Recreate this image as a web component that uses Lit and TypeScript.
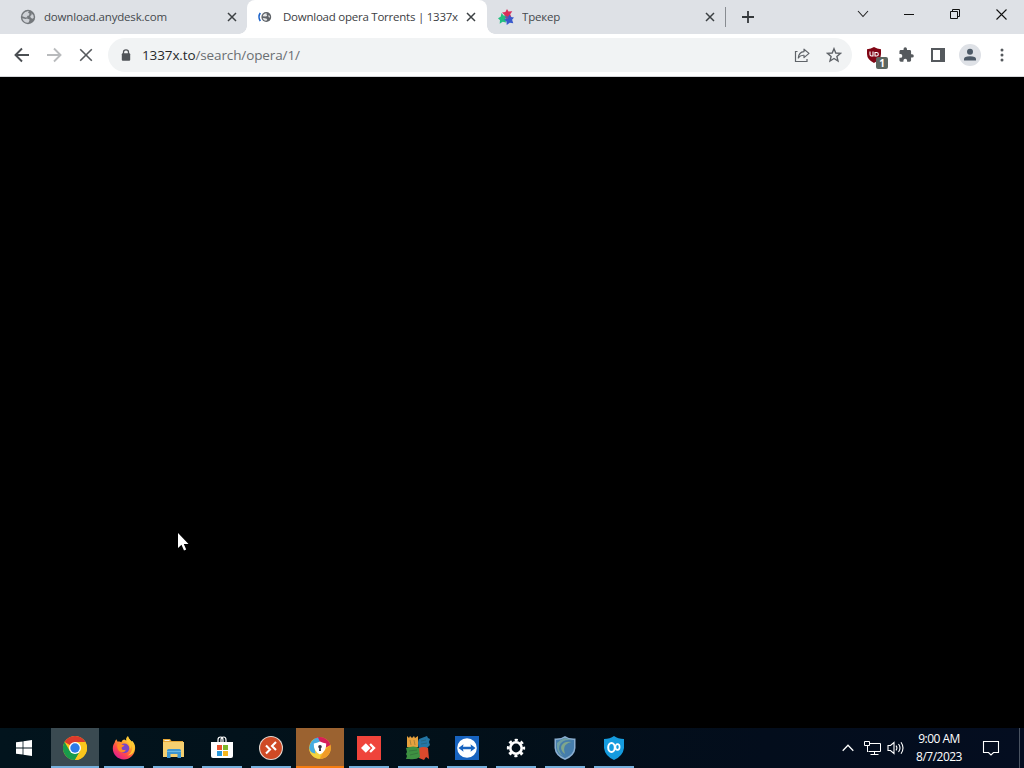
import { css, html, LitElement, TemplateResult } from 'lit';
import { customElement, property } from 'lit/decorators.js';

const globe = html`
  <svg viewBox="0 0 16 16" width="16" height="16">
    <circle cx="8" cy="8" r="7.2" fill="#74787c"/>
    <path d="M9 2.200L8 3.800 9.500 4.600 9 6.500 7 7 7.500 8.300 5.500 8.500 2.300 7.200C2.900 4.200 5.600 1.900 9 2.200Z" fill="#dee1e6" fill-opacity=".85"/>
    <path d="M2.300 9.300L5.500 10 7 9.500 9.500 10.500 9.300 12 8.300 13.800C5.200 14 2.800 12 2.300 9.300Z" fill="#dee1e6" fill-opacity=".85"/>
    <path d="M11.500 4.200L13.500 6.500 13.700 9 12.200 9.700 10.600 8.500 10.200 7 11.600 6Z" fill="#dee1e6" fill-opacity=".85"/>
  </svg>`;

const loadingGlobe = html`
  <svg viewBox="0 0 16 16" width="16" height="16">
    <path d="M3.300 4C1.700 6.200 1.700 9.800 3.300 12" fill="none" stroke="#1b62c9" stroke-width="1.700"/>
    <circle cx="9.300" cy="8" r="4.900" fill="#5f6368"/>
    <path d="M9.800 4.300L9.300 5.300 10.200 6 9.700 7.200 8.500 7.600 5.700 7.200C6.200 5.400 7.800 4.100 9.800 4.300Z" fill="#fff" fill-opacity=".85"/>
    <path d="M5.700 9L8 9.300 10.300 9.900 9.500 11.700C7.500 11.900 6.100 10.800 5.700 9Z" fill="#fff" fill-opacity=".85"/>
    <path d="M11.600 5.700L12.900 7.300 12.800 8.700 11.500 8Z" fill="#fff" fill-opacity=".85"/>
  </svg>`;

const tracker = html`
  <svg viewBox="0 0 16 16" width="16" height="16">
    <path d="M9 0L10.500 2.500 14.300 2.200 12.200 5.200 13.600 8.800 9.800 8.200 6.400 9.400 6.600 6 4 3.600 7.400 2.900Z" fill="#d92f5a"/>
    <path d="M3.600 4L5.500 6.600 8.800 7 7.400 9.800 8 13.400 4.700 12.700 1.700 14.700 2 11.300 0 9.300 2.600 7.800Z" fill="#22bf80"/>
    <path d="M11.600 5.600L12.900 8 16 8.400 14.100 10.800 15.300 14.300 11.800 13.800 8.700 16 8.500 12.600 6 10.800 9.300 9.200Z" fill="#3859cc"/>
    <circle cx="8.800" cy="8.500" r="1.600" fill="#76509f"/>
  </svg>`;

const taskIcons: Record<string, TemplateResult> = {
  chrome: html`
    <svg viewBox="0 0 24 24" width="24" height="24">
      <circle cx="12" cy="12" r="12" fill="#fbc61c"/>
      <path d="M12 12L1.600 6A12 12 0 0 1 22.400 6Z" fill="#dc3a2c"/>
      <path d="M1.600 6A12 12 0 0 0 12 24L17.200 15 12 12 6.800 15Z" fill="#199b4b"/>
      <path d="M12 6H22.400A12 12 0 0 1 12 24L17.200 15Z" fill="#fbc61c"/>
      <circle cx="12" cy="12" r="6" fill="#fff"/>
      <circle cx="12" cy="12" r="4.700" fill="#2c7be8"/>
    </svg>`,
  firefox: html`
    <svg viewBox="0 0 24 24" width="24" height="24">
      <defs>
        <linearGradient id="fox" x1=".85" y1=".1" x2=".25" y2=".95">
          <stop offset="0" stop-color="#ffe543"/>
          <stop offset=".38" stop-color="#ff9a2b"/>
          <stop offset=".68" stop-color="#ff4a4a"/>
          <stop offset="1" stop-color="#e3208b"/>
        </linearGradient>
      </defs>
      <path d="M4.300 3.200L5.700 5.800C7 5.300 8.400 5.600 9.300 6.200 10.400 4 11.600 3.700 12.300 3.600L14.500 4.700C14 2.400 14.700 1 16 .2 16.200 2.500 18.200 3.700 19.600 5.500L20.400 5C22.800 8 23.300 10.200 23.100 13 22.500 19.300 17.700 23.500 12 23.500 5.700 23.500 1 18.800.800 12.800.700 9.500 1.700 8 2.700 6.500 3 5 3.500 4 4.300 3.200Z" fill="url(#fox)"/>
      <circle cx="12.500" cy="12.300" r="4.800" fill="#7845c8"/>
      <path d="M5.300 8.200C8 7.300 9.700 9 12.400 9.200 12.300 10.500 10.200 10.600 9.700 11.500 9.200 13.800 11.500 14.700 13.700 13.700 13 17 8.500 17 6.500 14.500 5.200 12.700 5 10.400 5.300 8.200Z" fill="#ff8a24"/>
      <path d="M14.500 4.700C16.500 7 18.400 9 17.800 13.200 19.300 12 19.500 10 19.200 8.600 22 13 18.800 18.500 15 19.600 21 19.500 23.500 14 22.200 9 21 6 17 4 16 .2 14.700 1 14 2.400 14.500 4.700Z" fill="#ffc832"/>
    </svg>`,
  explorer: html`
    <svg viewBox="0 0 24 24" width="24" height="24">
      <path d="M2 3H9L10.500 5H22V9H2Z" fill="#e5a636"/>
      <path d="M3.500 4H8.500V5H3.500Z" fill="#f5efe0"/>
      <rect x="2" y="6" width="21" height="15" fill="#f5cf70"/>
      <path d="M6 22V14.500Q6 13 7.500 13H18.500Q20 13 20 14.500V22H16.500V18H9.500V22Z" fill="#3d95d0"/>
      <path d="M6 15H20V16H6Z" fill="#69b9e5"/>
    </svg>`,
  store: html`
    <svg viewBox="0 0 24 24" width="24" height="24">
      <path d="M8 6V4Q8 1 10.700 1 13 1 13 4V6M11 6V4Q11 1 13.700 1 16 1 16 4V6" fill="none" stroke="#fff" stroke-width="1.200"/>
      <path d="M1 6H23V20Q23 22 21 22H3Q1 22 1 20Z" fill="#fff"/>
      <path d="M7 9H12V14H7Z" fill="#e9542f"/>
      <path d="M13 9H18V14H13Z" fill="#7eb72b"/>
      <path d="M7 15H12V20H7Z" fill="#2999dc"/>
      <path d="M13 15H18V20H13Z" fill="#f7b71f"/>
    </svg>`,
  remote: html`
    <svg viewBox="0 0 24 24" width="24" height="24">
      <circle cx="12" cy="12" r="12" fill="#e4d9d2"/>
      <circle cx="12" cy="12" r="10.900" fill="#cf4a25"/>
      <path d="M7 9.500L11 13.500 7 17.500M17 6L13 10 17 14" fill="none" stroke="#fff" stroke-width="2.100"/>
    </svg>`,
  secureBrowser: html`
    <svg viewBox="0 0 24 24" width="24" height="24">
      <circle cx="12" cy="12" r="10.800" fill="#f4bf2a"/>
      <path d="M7 2.200A11 11 0 0 1 22.500 9L17 12 12 6Z" fill="#d71f58"/>
      <path d="M22.500 9A11 11 0 0 1 12 22.800L16 15Z" fill="#f09b29"/>
      <path d="M12 22.800A11 11 0 0 1 1.200 11L6 8 12 18Z" fill="#f5d33d"/>
      <path d="M1.200 12A11 11 0 0 1 10 1.400L12 6 6 9 7.500 17.500Q2 17 1.200 12Z" fill="#46ace0"/>
      <path d="M12 5.500Q15 7.200 18.200 7.500 18.700 15 12 18.500 5.300 15 5.800 7.500 9 7.200 12 5.500Z" fill="#fff"/>
      <circle cx="12" cy="10.800" r="1.800" fill="#303543"/>
      <path d="M11.300 11H12.700L13 15H11Z" fill="#303543"/>
    </svg>`,
  anydesk: html`
    <svg viewBox="0 0 24 24" width="24" height="24">
      <rect width="24" height="24" fill="#ef443b"/>
      <path d="M4 12L8.800 7.200 13.600 12 8.800 16.800Z" fill="#fff"/>
      <path d="M12.300 8.800L13.900 7.200 18.700 12 13.900 16.800 12.300 15.200 15.500 12Z" fill="#fff"/>
    </svg>`,
  avg: html`
    <svg viewBox="0 0 24 24" width="24" height="24">
      <path d="M1 0L3 2 4 0 6 2 8 0 9 2 12 0V11Q7 13 1 11Z" fill="#e6a13e"/>
      <path d="M13 3L21 0 22 2 24 3 23 6 24 9 21 12H13Q11 7 13 3Z" fill="#2376a5"/>
      <path d="M13 12Q18 10 22 12L23 23 20 21 18 24 13 22Z" fill="#d9492c"/>
      <path d="M0 12Q8 9 13 12L14 21Q10 24 3 23L0 23 1 20 0 18 1 16Z" fill="#3e9142"/>
      <path d="M4 4L5 9M8 4L9 9M15 5L20 4M15 8L21 7M3 15L11 14M4 19L12 17" stroke="#263d30" stroke-opacity=".3"/>
    </svg>`,
  teamviewer: html`
    <svg viewBox="0 0 24 24" width="24" height="24">
      <rect width="24" height="24" fill="#1763bf"/>
      <circle cx="12" cy="12" r="9.800" fill="#fff"/>
      <path d="M3.500 12L8.500 8.200 8 10.800H16L15.500 8.200 20.500 12 15.500 15.800 16 13.200H8L8.500 15.800Z" fill="#1763bf"/>
    </svg>`,
  settings: html`
    <svg viewBox="0 0 24 24" width="24" height="24">
      <circle cx="12" cy="12" r="5.700" fill="none" stroke="#fff" stroke-width="2.600"/>
      <circle cx="12" cy="12" r="7.900" fill="none" stroke="#fff" stroke-width="2.500" stroke-dasharray="3.102" stroke-dashoffset="1.551"/>
    </svg>`,
  shield: html`
    <svg viewBox="0 0 24 24" width="24" height="24">
      <path d="M12 0Q16 3 22.500 2.500V12Q22 20 12 24 2 20 1.500 12V2.500Q8 3 12 0Z" fill="#8aaed0"/>
      <path d="M12 1.700Q16 4 21 4V12Q20.500 18.500 12 22.300 3.500 18.500 3 12V4Q8 4 12 1.700Z" fill="#467dab"/>
      <path d="M19 4.300Q9 3 6.300 10 5 15 10 20 5 18 4 12V7Q8 3 12 2Z" fill="#6f9fa3"/>
      <path d="M18.500 6Q11 4.500 8.300 10 7 14.500 12 18 10 12 12.500 9 15 6.500 18.500 6Z" fill="#7fa68b"/>
    </svg>`,
  vpn: html`
    <svg viewBox="0 0 24 24" width="24" height="24">
      <path d="M12 0Q16 3 22 3V12Q21 20 12 24 3 20 2 12V3Q8 3 12 0Z" fill="#159bde"/>
      <ellipse cx="9.500" cy="11.500" rx="3.300" ry="4.600" fill="none" stroke="#fff" stroke-width="2"/>
      <ellipse cx="15.500" cy="11" rx="2.100" ry="2.800" fill="none" stroke="#fff" stroke-width="1.700"/>
    </svg>`,
};

@customElement('browser-tab')
export class BrowserTab extends LitElement {
    @property({ type: Boolean, reflect: true }) active: boolean = false;
    @property() label: string = '';
    @property({ attribute: false }) icon?: TemplateResult;

    static styles = [ css`
      :host {
        display: flex;
        align-items: center;
        box-sizing: border-box;
        width: 239px;
        height: 34px;
        padding: 0 10px 0 12px;
        color: #45494d;
      }

      :host([active]) {
        position: relative;
        width: 240px;
        margin-right: -1px;
        padding: 0 11px 0 10px;
        border-radius: 8px 8px 0 0;
        background: #fff;
        color: #3c4043;
      }

      :host([active])::before,
      :host([active])::after {
        content: '';
        position: absolute;
        bottom: 0;
        width: 8px;
        height: 8px;
      }

      :host([active])::before {
        left: -8px;
        background: radial-gradient(circle at 0 0, transparent 7.500px, #fff 8px);
      }

      :host([active])::after {
        right: -8px;
        background: radial-gradient(circle at 100% 0, transparent 7.500px, #fff 8px);
      }

      svg {
        display: block;
        flex: none;
      }

      .label {
        flex: 1;
        margin-left: 8px;
        white-space: nowrap;
        overflow: hidden;
        font-size: 11.500px;
        line-height: 18px;
        letter-spacing: -0.180px;
      }

      :host([active]) .label {
        margin-left: 10px;
        letter-spacing: -0.240px;
      }
    `];

    public render() {
        return html`
          ${this.icon}
          <span class="label">${this.label}</span>
          <svg viewBox="0 0 10 10" width="10" height="10">
            <path d="M1 1L9 9M9 1L1 9" stroke="#3c4043" stroke-width="1.500"/>
          </svg>`;
    }
}

@customElement('task-button')
export class TaskButton extends LitElement {
    @property({ type: Boolean, reflect: true }) active: boolean = false;
    @property({ type: Boolean, reflect: true }) alert: boolean = false;
    @property() app: string = '';

    static styles = [ css`
      :host {
        display: flex;
        flex-direction: column;
        align-items: center;
        justify-content: space-between;
        width: 48px;
        height: 40px;
      }

      :host([active]) {
        background: #3a4a51;
      }

      :host([alert]) {
        background: #9b6230;
      }

      svg {
        display: block;
        margin-top: 8px;
      }

      .line {
        width: 40px;
        height: 2px;
        background: #76b0dd;
      }

      :host([active]) .line,
      :host([alert]) .line {
        width: 48px;
      }

      :host([alert]) .line {
        background: #f57c10;
      }
    `];

    public render() {
        return html`${taskIcons[this.app]}<div class="line"></div>`;
    }
}

@customElement('app-root')
export class AppRoot extends LitElement {
    static styles = [ css`
      :host {
        display: flex;
        flex-direction: column;
        position: relative;
        width: 1024px;
        height: 768px;
        overflow: hidden;
        background: #000;
        font-family: 'Open Sans', 'Noto Sans', sans-serif;
      }

      svg {
        display: block;
        flex: none;
      }

      .tabs {
        display: flex;
        height: 34px;
        padding-left: 8px;
        background: #dee1e6;
      }

      .new-tab {
        display: flex;
        align-items: center;
        gap: 16px;
        height: 34px;
      }

      .divider {
        width: 1px;
        height: 20px;
        background: #888c91;
      }

      .window {
        display: grid;
        grid-template-columns: repeat(4, 46px);
        justify-items: center;
        align-items: center;
        height: 28px;
        margin-left: auto;
      }

      .toolbar {
        display: flex;
        align-items: center;
        box-sizing: border-box;
        height: 43px;
        padding: 0 12px 1px 14px;
        background: #fff;
        border-bottom: 1px solid #d5d7da;
      }

      .nav {
        display: flex;
        flex: none;
        gap: 16px;
        width: 94px;
      }

      .omnibox {
        display: flex;
        flex: none;
        align-items: center;
        box-sizing: border-box;
        width: 744px;
        height: 34px;
        padding: 0 10px 0 12px;
        border-radius: 17px;
        background: #f1f3f4;
      }

      .url {
        flex: 1;
        margin-left: 10px;
        font-size: 13.500px;
        line-height: 20px;
        letter-spacing: -0.120px;
        color: #6a6e72;
      }

      .host {
        color: #27292c;
      }

      .share {
        margin-right: 16px;
      }

      .extensions {
        display: flex;
        align-items: center;
        gap: 12px;
        margin-left: 12px;
      }

      .avatar {
        margin: 0 -1px;
      }

      .blocker {
        position: relative;
        width: 20px;
        height: 20px;
      }

      .badge {
        position: absolute;
        left: 12px;
        top: 12px;
        width: 12px;
        height: 12px;
        border-radius: 2px;
        background: #5c6660;
        color: #fff;
        font-size: 10px;
        font-weight: 700;
        line-height: 12px;
        text-align: center;
      }

      .page {
        flex: 1;
        background: #000;
      }

      .taskbar {
        display: flex;
        height: 40px;
        color: #fff;
        background: linear-gradient(90deg, #02141d, #021019 45%, #030d1c 75%, #040d20);
      }

      .start {
        display: flex;
        align-items: center;
        justify-content: center;
        width: 48px;
        margin-right: 3px;
      }

      .apps {
        display: flex;
        gap: 1px;
      }

      .tray {
        display: flex;
        align-items: center;
        margin-left: auto;
      }

      .network {
        margin: 0 0 0 10px;
      }

      .clock {
        width: 60px;
        margin: 0 13px 0 4px;
        font-size: 12px;
        line-height: 18px;
        text-align: center;
        letter-spacing: -0.500px;
        white-space: nowrap;
      }

      .show-desktop {
        width: 4px;
        height: 40px;
        margin-left: 19px;
        border-left: 1px solid #4a5361;
      }

      .cursor {
        position: absolute;
        left: 177px;
        top: 532px;
      }
    `];

    private tabStrip() {
        return html`
          <div class="tabs">
            <browser-tab label="download.anydesk.com" .icon=${globe}></browser-tab>
            <browser-tab active label="Download opera Torrents | 1337x" .icon=${loadingGlobe}></browser-tab>
            <browser-tab label="Трекер" .icon=${tracker}></browser-tab>
            <div class="new-tab">
              <div class="divider"></div>
              <svg viewBox="0 0 12 12" width="12" height="12"><path d="M6 0V12M0 6H12" stroke="#34383b" stroke-width="1.800"/></svg>
            </div>
            <div class="window">
              <svg viewBox="0 0 12 8" width="12" height="8"><path d="M1 1L6 6.500 11 1" fill="none" stroke="#222" stroke-width="1.100"/></svg>
              <svg viewBox="0 0 10 10" width="10" height="10"><path d="M0 5.500H10" stroke="#111"/></svg>
              <svg viewBox="0 0 10 10" width="10" height="10"><path d="M.5 2.500H7.500V9.500H.5ZM2.500 2.500V.5H9.500V7.500H7.500" fill="none" stroke="#111"/></svg>
              <svg viewBox="0 0 11 11" width="11" height="11"><path d="M.5.5L10.500 10.500M10.500.5L.5 10.500" stroke="#111" stroke-width="1.100"/></svg>
            </div>
          </div>`;
    }

    private toolbar() {
        return html`
          <div class="toolbar">
            <div class="nav">
              <svg viewBox="0 0 16 16" width="16" height="16"><path d="M15 8H2M8 1.500L1.500 8 8 14.500" fill="none" stroke="#4b4f53" stroke-width="1.900"/></svg>
              <svg viewBox="0 0 16 16" width="16" height="16"><path d="M1 8H14M8 1.500L14.500 8 8 14.500" fill="none" stroke="#b9bbbd" stroke-width="1.900"/></svg>
              <svg viewBox="0 0 16 16" width="16" height="16"><path d="M2.200 2.200L13.800 13.800M13.800 2.200L2.200 13.800" stroke="#55595d" stroke-width="1.600"/></svg>
            </div>
            <div class="omnibox">
              <svg viewBox="0 0 12 12" width="12" height="12"><path d="M3.500 5V3Q3.500.8 6 .8 8.500.8 8.500 3V5" fill="none" stroke="#505458" stroke-width="1.300"/><rect x="1.800" y="4.200" width="8.400" height="7.600" rx="1" fill="#505458"/></svg>
              <span class="url"><span class="host">1337x.to</span>/search/opera/1/</span>
              <svg class="share" viewBox="0 0 16 16" width="16" height="16"><path d="M3.500 4.500H1.500V14.500H13V12" fill="none" stroke="#5f6368" stroke-width="1.200"/><path d="M10 2.200L15 6.400 10 10.600V8.300Q6.500 8 4.300 11 4.800 5 10 4.600Z" fill="none" stroke="#5f6368" stroke-width="1.200" stroke-linejoin="round"/></svg>
              <svg viewBox="0 0 16 16" width="16" height="16"><path d="M8 1.700L9.800 6 14.500 6.400 10.900 9.400 12 14 8 11.500 4 14 5.100 9.400 1.500 6.400 6.200 6Z" fill="none" stroke="#5f6368" stroke-width="1.400"/></svg>
            </div>
            <div class="extensions">
              <div class="blocker">
                <svg viewBox="0 0 20 20" width="20" height="20">
                  <path d="M10 2Q13 4 17 4.200V9Q17 14.500 10 18 3 14.500 3 9V4.200Q7 4 10 2Z" fill="#800514"/>
                  <path d="M6 6.500V9.500Q6 11 7.500 11H9V6.500M11 7.500H12.500Q14.300 7.500 14.300 9.200 14.300 11 12.500 11H11Z" fill="none" stroke="#fff" stroke-width="1.100"/>
                </svg>
                <span class="badge">1</span>
              </div>
              <svg viewBox="0 0 24 24" width="20" height="20"><path d="M20.500 11H19V7c0-1.100-.9-2-2-2h-4V3.500a2.500 2.500 0 0 0-5 0V5H4c-1.100 0-2 .9-2 2v3.800h1.500a2.700 2.700 0 0 1 0 5.400H2V20c0 1.100.9 2 2 2h3.800v-1.500a2.700 2.700 0 0 1 5.400 0V22H17c1.100 0 2-.9 2-2v-4h1.500a2.500 2.500 0 0 0 0-5z" fill="#55595d" transform="translate(2.500 2) scale(.82)"/></svg>
              <svg viewBox="0 0 20 20" width="20" height="20"><path d="M3 3H17V17H3ZM5 5V15H12V5Z" fill="#55595d" fill-rule="evenodd"/></svg>
              <svg class="avatar" viewBox="0 0 22 22" width="22" height="22"><circle cx="11" cy="11" r="11" fill="#dee1e6"/><circle cx="11" cy="7.800" r="3" fill="#4c5966"/><path d="M5 16.500V15Q5 12.200 11 12.200 17 12.200 17 15V16.500Z" fill="#4c5966"/></svg>
              <svg viewBox="0 0 20 20" width="20" height="20"><g fill="#55595d"><circle cx="10" cy="5" r="1.500"/><circle cx="10" cy="10" r="1.500"/><circle cx="10" cy="15" r="1.500"/></g></svg>
            </div>
          </div>`;
    }

    private taskbar() {
        return html`
          <div class="taskbar">
            <div class="start">
              <svg viewBox="0 0 16 16" width="16" height="16"><path d="M0 2.300L6.600 1.400V7.600H0ZM7.400 1.300L16 0V7.600H7.400ZM0 8.400H6.600V14.600L0 13.700ZM7.400 8.400H16V16L7.400 14.700Z" fill="#fff"/></svg>
            </div>
            <div class="apps">
              ${Object.keys(taskIcons).map((app) => html`
                <task-button app=${app} ?active=${app === 'chrome'} ?alert=${app === 'secureBrowser'}></task-button>`)}
            </div>
            <div class="tray">
              <svg viewBox="0 0 12 8" width="12" height="8"><path d="M.7 6.700L6 1.300 11.300 6.700" fill="none" stroke="#fff" stroke-width="1.300"/></svg>
              <svg class="network" viewBox="0 0 17 16" width="17" height="16"><path d="M5.500 3.500H16.500V11.500H4.500M10.500 11.500V14.500M6.500 14.500H14.500M.5 1.500H5.500V5.500H.5ZM3.500 5.500V12" fill="none" stroke="#fff"/></svg>
              <svg viewBox="0 0 24 16" width="24" height="16"><g transform="translate(1 0)" fill="none" stroke="#fff" stroke-width="1.100"><path d="M6 5.500H8.500L12 2.500V13.500L8.500 10.500H6Z"/><path d="M14 5.700Q15.800 8 14 10.300M16.500 4Q19.500 8 16.500 12M19 2.300Q23 8 19 13.700"/></g></svg>
              <div class="clock"><div>9:00 AM</div><div>8/7/2023</div></div>
              <svg viewBox="0 0 18 18" width="18" height="18"><path d="M1.500 2.500H16.500V13.500H11.500L9 16 6.500 13.500H1.500Z" fill="none" stroke="#fff" stroke-width="1.100"/></svg>
              <div class="show-desktop"></div>
            </div>
          </div>`;
    }

    public render() {
        return html`
          ${this.tabStrip()}
          ${this.toolbar()}
          <div class="page"></div>
          ${this.taskbar()}
          <svg class="cursor" viewBox="0 0 12 20" width="12" height="20"><path d="M1 1V16L4.500 12.800 7 18.500 9.200 17.500 6.800 12H11.500Z" fill="#fff"/></svg>`;
    }
}
